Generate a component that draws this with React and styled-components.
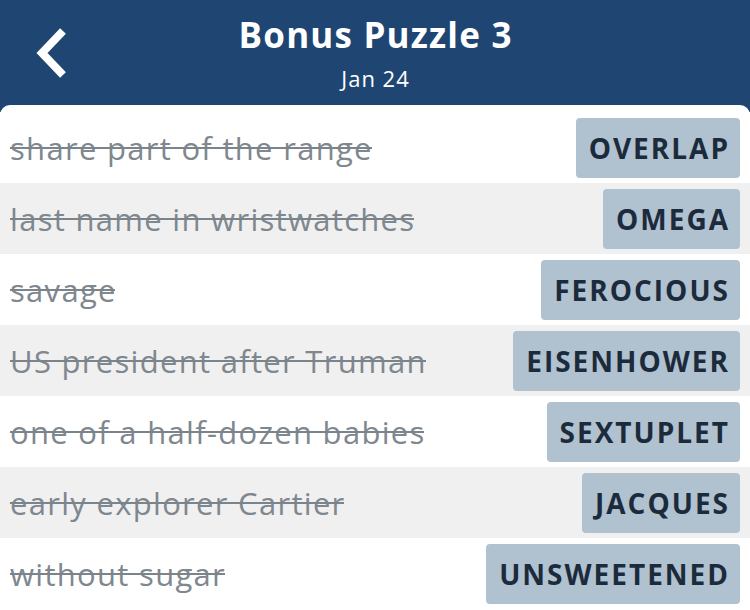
import React from "react";
import styled, { createGlobalStyle } from "styled-components";

const clues = [
  { clue: "share part of the range", answer: "OVERLAP" },
  { clue: "last name in wristwatches", answer: "OMEGA" },
  { clue: "savage", answer: "FEROCIOUS" },
  { clue: "US president after Truman", answer: "EISENHOWER" },
  { clue: "one of a half-dozen babies", answer: "SEXTUPLET" },
  { clue: "early explorer Cartier", answer: "JACQUES" },
  { clue: "without sugar", answer: "UNSWEETENED" },
];

const App = () => {
  return (
    <>
      <GlobalStyle />
      <Page>
        <Header>
          <BackButton aria-label="Back">
            <svg width="34" height="52" viewBox="0 0 34 52">
              <path
                d="M29 4 L8 26 L29 48"
                fill="none"
                stroke="#fff"
                strokeWidth="8"
                strokeLinecap="butt"
                strokeLinejoin="miter"
              />
            </svg>
          </BackButton>
          <Title>Bonus Puzzle 3</Title>
          <Subtitle>Jan 24</Subtitle>
        </Header>
        <Card>
          {clues.map((item, i) => (
            <Row key={item.answer} shaded={i % 2 === 1}>
              <Clue>{item.clue}</Clue>
              <Answer>{item.answer}</Answer>
            </Row>
          ))}
        </Card>
      </Page>
    </>
  );
};

export default App;

const GlobalStyle = createGlobalStyle`
  body {
    margin: 0;
    background: #1f4672;
    font-family: "Open Sans", "Lato", sans-serif;
  }
`;

const Page = styled.div`
  width: 750px;
  height: 610px;
  display: flex;
  flex-direction: column;
  overflow: hidden;
`;

const Header = styled.div`
  position: relative;
  height: 105px;
  flex-shrink: 0;
  background: #1f4672;
  color: white;
  display: flex;
  flex-direction: column;
  align-items: center;
`;

const BackButton = styled.div`
  position: absolute;
  left: 34px;
  top: 27px;
  display: flex;
`;

const Title = styled.div`
  margin-top: 13px;
  font-size: 35px;
  font-weight: 700;
  line-height: 44px;
  letter-spacing: 1.2px;
  padding-left: 1.2px;
`;

const Subtitle = styled.div`
  font-size: 22px;
  line-height: 26px;
  margin-top: 8px;
  letter-spacing: 1px;
  padding-left: 1px;
`;

const Card = styled.div`
  flex: 1;
  background: white;
  border-radius: 10px 10px 0 0;
  padding-top: 7px;
  display: flex;
  flex-direction: column;
`;

const Row = styled.div`
  height: 71px;
  flex-shrink: 0;
  display: flex;
  align-items: center;
  justify-content: space-between;
  padding: 0 10px;
  background: ${(p) => (p.shaded ? "#f0f0f0" : "white")};
`;

const Clue = styled.div`
  position: relative;
  font-size: 31px;
  letter-spacing: 1.3px;
  color: #7f878f;
  white-space: nowrap;

  &::after {
    content: "";
    position: absolute;
    left: 0;
    right: 1.3px;
    top: 49%;
    height: 2px;
    background: #7b838b;
  }
`;

const Answer = styled.div`
  height: 60px;
  padding: 0 10px 0 13px;
  display: flex;
  align-items: center;
  background: #b0c1cf;
  border-radius: 4px;
  color: #1c2b3c;
  font-size: 28px;
  font-weight: 700;
  letter-spacing: 2px;
`;
